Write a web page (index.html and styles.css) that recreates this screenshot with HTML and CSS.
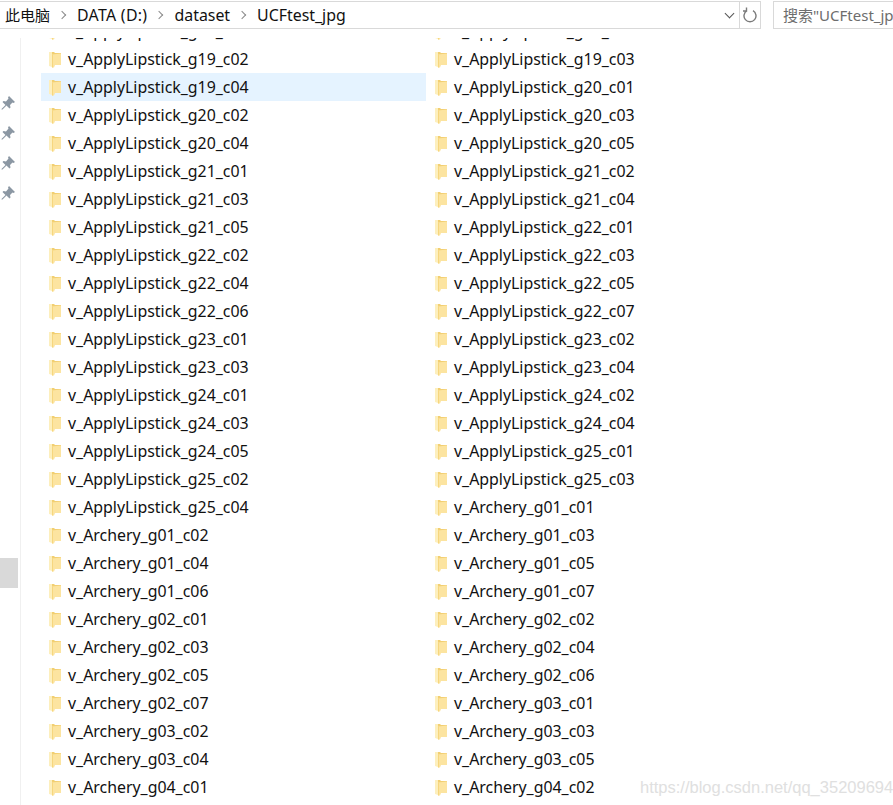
FILE: index.html
```html
<!DOCTYPE html>
<html>
<head>
	<title>UCFtest_jpg</title>
	<meta http-equiv="content-type" content="text/html; charset=utf-8">
	<link rel="stylesheet" href="styles.css">
</head>
<body>
	<svg class="defs" width="0" height="0">
		<symbol id="folder" viewBox="0 0 12 17">
			<path d="M0 1h5l1 1h6v11H0z" fill="#f2cf72"/>
			<path d="M0 1h3v15l-3-1z" fill="#fdefbd"/>
			<path d="M3 3.500l9-1V14H6l-1 2.500H3z" fill="#fce4a0"/>
			<path d="M3 3.500h1v13H3z" fill="#f6d67e"/>
		</symbol>
		<symbol id="pin" viewBox="0 0 14 14">
			<path d="M8 0l6 6-1.500 1-1-.5-2.500 2.500.5 2.500-1 1-3-3-4 4H.5v-.5l4-4-3-3 1-1 2.500.5L7.500 2.500 7 1.500z" fill="#8b97a3"/>
		</symbol>
	</svg>

	<div class="topbar">
		<div class="address">
			<div class="crumbs">
				<span class="crumb-pc">此电脑</span><span class="sep"></span>
				<span class="crumb-drive">DATA (D:)</span><span class="sep"></span>
				<span>dataset</span><span class="sep"></span>
				<span>UCFtest_jpg</span>
			</div>
			<div class="dropdown"><span class="chevron"></span></div>
			<div class="refresh">
				<svg width="14" height="16" viewBox="0 0 14 16"><path d="M4 3.600A6 6 0 1 0 10 3.600M3.500 .5v3.500H0" fill="none" stroke="#7a7a7a" stroke-width="1.400"/></svg>
			</div>
		</div>
		<div class="searchbox">搜索"UCFtest_jpg"</div>
	</div>

	<div class="main">
		<div class="sidebar">
			<svg class="pin"><use href="#pin"/></svg>
			<svg class="pin"><use href="#pin"/></svg>
			<svg class="pin"><use href="#pin"/></svg>
			<svg class="pin"><use href="#pin"/></svg>
			<div class="scrollthumb"></div>
		</div>
		<div class="files">
			<div class="item clipped"><svg class="icon"><use href="#folder"/></svg><span class="name">v_ApplyLipstick_g19_c00</span></div>
			<div class="item clipped"><svg class="icon"><use href="#folder"/></svg><span class="name">v_ApplyLipstick_g19_c01</span></div>
			<div class="item"><svg class="icon"><use href="#folder"/></svg><span class="name">v_ApplyLipstick_g19_c02</span></div>
			<div class="item"><svg class="icon"><use href="#folder"/></svg><span class="name">v_ApplyLipstick_g19_c03</span></div>
			<div class="item selected"><svg class="icon"><use href="#folder"/></svg><span class="name">v_ApplyLipstick_g19_c04</span></div>
			<div class="item"><svg class="icon"><use href="#folder"/></svg><span class="name">v_ApplyLipstick_g20_c01</span></div>
			<div class="item"><svg class="icon"><use href="#folder"/></svg><span class="name">v_ApplyLipstick_g20_c02</span></div>
			<div class="item"><svg class="icon"><use href="#folder"/></svg><span class="name">v_ApplyLipstick_g20_c03</span></div>
			<div class="item"><svg class="icon"><use href="#folder"/></svg><span class="name">v_ApplyLipstick_g20_c04</span></div>
			<div class="item"><svg class="icon"><use href="#folder"/></svg><span class="name">v_ApplyLipstick_g20_c05</span></div>
			<div class="item"><svg class="icon"><use href="#folder"/></svg><span class="name">v_ApplyLipstick_g21_c01</span></div>
			<div class="item"><svg class="icon"><use href="#folder"/></svg><span class="name">v_ApplyLipstick_g21_c02</span></div>
			<div class="item"><svg class="icon"><use href="#folder"/></svg><span class="name">v_ApplyLipstick_g21_c03</span></div>
			<div class="item"><svg class="icon"><use href="#folder"/></svg><span class="name">v_ApplyLipstick_g21_c04</span></div>
			<div class="item"><svg class="icon"><use href="#folder"/></svg><span class="name">v_ApplyLipstick_g21_c05</span></div>
			<div class="item"><svg class="icon"><use href="#folder"/></svg><span class="name">v_ApplyLipstick_g22_c01</span></div>
			<div class="item"><svg class="icon"><use href="#folder"/></svg><span class="name">v_ApplyLipstick_g22_c02</span></div>
			<div class="item"><svg class="icon"><use href="#folder"/></svg><span class="name">v_ApplyLipstick_g22_c03</span></div>
			<div class="item"><svg class="icon"><use href="#folder"/></svg><span class="name">v_ApplyLipstick_g22_c04</span></div>
			<div class="item"><svg class="icon"><use href="#folder"/></svg><span class="name">v_ApplyLipstick_g22_c05</span></div>
			<div class="item"><svg class="icon"><use href="#folder"/></svg><span class="name">v_ApplyLipstick_g22_c06</span></div>
			<div class="item"><svg class="icon"><use href="#folder"/></svg><span class="name">v_ApplyLipstick_g22_c07</span></div>
			<div class="item"><svg class="icon"><use href="#folder"/></svg><span class="name">v_ApplyLipstick_g23_c01</span></div>
			<div class="item"><svg class="icon"><use href="#folder"/></svg><span class="name">v_ApplyLipstick_g23_c02</span></div>
			<div class="item"><svg class="icon"><use href="#folder"/></svg><span class="name">v_ApplyLipstick_g23_c03</span></div>
			<div class="item"><svg class="icon"><use href="#folder"/></svg><span class="name">v_ApplyLipstick_g23_c04</span></div>
			<div class="item"><svg class="icon"><use href="#folder"/></svg><span class="name">v_ApplyLipstick_g24_c01</span></div>
			<div class="item"><svg class="icon"><use href="#folder"/></svg><span class="name">v_ApplyLipstick_g24_c02</span></div>
			<div class="item"><svg class="icon"><use href="#folder"/></svg><span class="name">v_ApplyLipstick_g24_c03</span></div>
			<div class="item"><svg class="icon"><use href="#folder"/></svg><span class="name">v_ApplyLipstick_g24_c04</span></div>
			<div class="item"><svg class="icon"><use href="#folder"/></svg><span class="name">v_ApplyLipstick_g24_c05</span></div>
			<div class="item"><svg class="icon"><use href="#folder"/></svg><span class="name">v_ApplyLipstick_g25_c01</span></div>
			<div class="item"><svg class="icon"><use href="#folder"/></svg><span class="name">v_ApplyLipstick_g25_c02</span></div>
			<div class="item"><svg class="icon"><use href="#folder"/></svg><span class="name">v_ApplyLipstick_g25_c03</span></div>
			<div class="item"><svg class="icon"><use href="#folder"/></svg><span class="name">v_ApplyLipstick_g25_c04</span></div>
			<div class="item"><svg class="icon"><use href="#folder"/></svg><span class="name">v_Archery_g01_c01</span></div>
			<div class="item"><svg class="icon"><use href="#folder"/></svg><span class="name">v_Archery_g01_c02</span></div>
			<div class="item"><svg class="icon"><use href="#folder"/></svg><span class="name">v_Archery_g01_c03</span></div>
			<div class="item"><svg class="icon"><use href="#folder"/></svg><span class="name">v_Archery_g01_c04</span></div>
			<div class="item"><svg class="icon"><use href="#folder"/></svg><span class="name">v_Archery_g01_c05</span></div>
			<div class="item"><svg class="icon"><use href="#folder"/></svg><span class="name">v_Archery_g01_c06</span></div>
			<div class="item"><svg class="icon"><use href="#folder"/></svg><span class="name">v_Archery_g01_c07</span></div>
			<div class="item"><svg class="icon"><use href="#folder"/></svg><span class="name">v_Archery_g02_c01</span></div>
			<div class="item"><svg class="icon"><use href="#folder"/></svg><span class="name">v_Archery_g02_c02</span></div>
			<div class="item"><svg class="icon"><use href="#folder"/></svg><span class="name">v_Archery_g02_c03</span></div>
			<div class="item"><svg class="icon"><use href="#folder"/></svg><span class="name">v_Archery_g02_c04</span></div>
			<div class="item"><svg class="icon"><use href="#folder"/></svg><span class="name">v_Archery_g02_c05</span></div>
			<div class="item"><svg class="icon"><use href="#folder"/></svg><span class="name">v_Archery_g02_c06</span></div>
			<div class="item"><svg class="icon"><use href="#folder"/></svg><span class="name">v_Archery_g02_c07</span></div>
			<div class="item"><svg class="icon"><use href="#folder"/></svg><span class="name">v_Archery_g03_c01</span></div>
			<div class="item"><svg class="icon"><use href="#folder"/></svg><span class="name">v_Archery_g03_c02</span></div>
			<div class="item"><svg class="icon"><use href="#folder"/></svg><span class="name">v_Archery_g03_c03</span></div>
			<div class="item"><svg class="icon"><use href="#folder"/></svg><span class="name">v_Archery_g03_c04</span></div>
			<div class="item"><svg class="icon"><use href="#folder"/></svg><span class="name">v_Archery_g03_c05</span></div>
			<div class="item"><svg class="icon"><use href="#folder"/></svg><span class="name">v_Archery_g04_c01</span></div>
			<div class="item"><svg class="icon"><use href="#folder"/></svg><span class="name">v_Archery_g04_c02</span></div>
		</div>
	</div>

	<div class="watermark">https://blog.csdn.net/qq_35209694</div>
</body>
</html>
```

FILE: styles.css
```css
html, body{
	margin:0;
	padding:0;
	height:805px;
	overflow:hidden;
	background:#fff;
}
body{
	position:relative;
	font:15.9px/20px "Noto Sans","Noto Sans CJK SC",sans-serif;
	color:#111;
}
.defs{
	display:block;
	height:0;
}
.topbar{
	display:flex;
	gap:12px;
	height:29px;
	padding-top:1px;
	box-sizing:border-box;
}
.address{
	display:flex;
	align-items:center;
	flex:none;
	width:761px;
	box-sizing:border-box;
	border:1px solid #d9d9d9;
	border-left:0;
}
.crumbs{
	display:flex;
	align-items:center;
	flex:1;
	padding-left:5px;
	white-space:nowrap;
}
.crumb-pc{
	font-size:15px;
}
.crumb-drive{
	letter-spacing:.3px;
}
.sep{
	width:5px;
	height:5px;
	margin:0 12px 0 9px;
	border-top:1.500px solid #8a8a8a;
	border-right:1.500px solid #8a8a8a;
	transform:rotate(45deg);
}
.dropdown{
	display:flex;
	justify-content:center;
	width:20px;
}
.chevron{
	width:6px;
	height:6px;
	margin-bottom:4px;
	border-right:1.500px solid #555;
	border-bottom:1.500px solid #555;
	transform:rotate(45deg);
}
.refresh{
	display:flex;
	align-items:center;
	justify-content:center;
	width:20px;
	height:100%;
	border-left:1px solid #d9d9d9;
}
.searchbox{
	flex:none;
	width:160px;
	box-sizing:border-box;
	padding-left:9px;
	line-height:26px;
	border:1px solid #d9d9d9;
	color:#6d6d6d;
	font-size:15px;
	white-space:nowrap;
}
.main{
	display:flex;
	margin-top:9px;
	height:767px;
	overflow:hidden;
}
.sidebar{
	display:flex;
	flex-direction:column;
	flex:none;
	width:21px;
	box-sizing:border-box;
	padding-top:58px;
	border-right:1px solid #f0f0f0;
}
.pin{
	flex:none;
	width:14px;
	height:14px;
	margin:0 0 16px 1px;
}
.scrollthumb{
	flex:none;
	width:18px;
	height:30px;
	margin-top:342px;
	background:#d9d9d9;
}
.files{
	display:grid;
	grid-template-columns:386px 386px;
	grid-auto-rows:28px;
	align-content:start;
	margin-top:-21px;
	padding-left:20px;
}
.item{
	display:flex;
	align-items:center;
	width:385px;
	white-space:nowrap;
}
.selected{
	background:#e5f3ff;
}
.icon{
	flex:none;
	width:12px;
	height:17px;
	margin:0 7px 0 8px;
}
.watermark{
	position:absolute;
	left:640px;
	top:778px;
	font:16.500px "Liberation Sans",sans-serif;
	color:#e0e0e0;
	white-space:nowrap;
}
```
